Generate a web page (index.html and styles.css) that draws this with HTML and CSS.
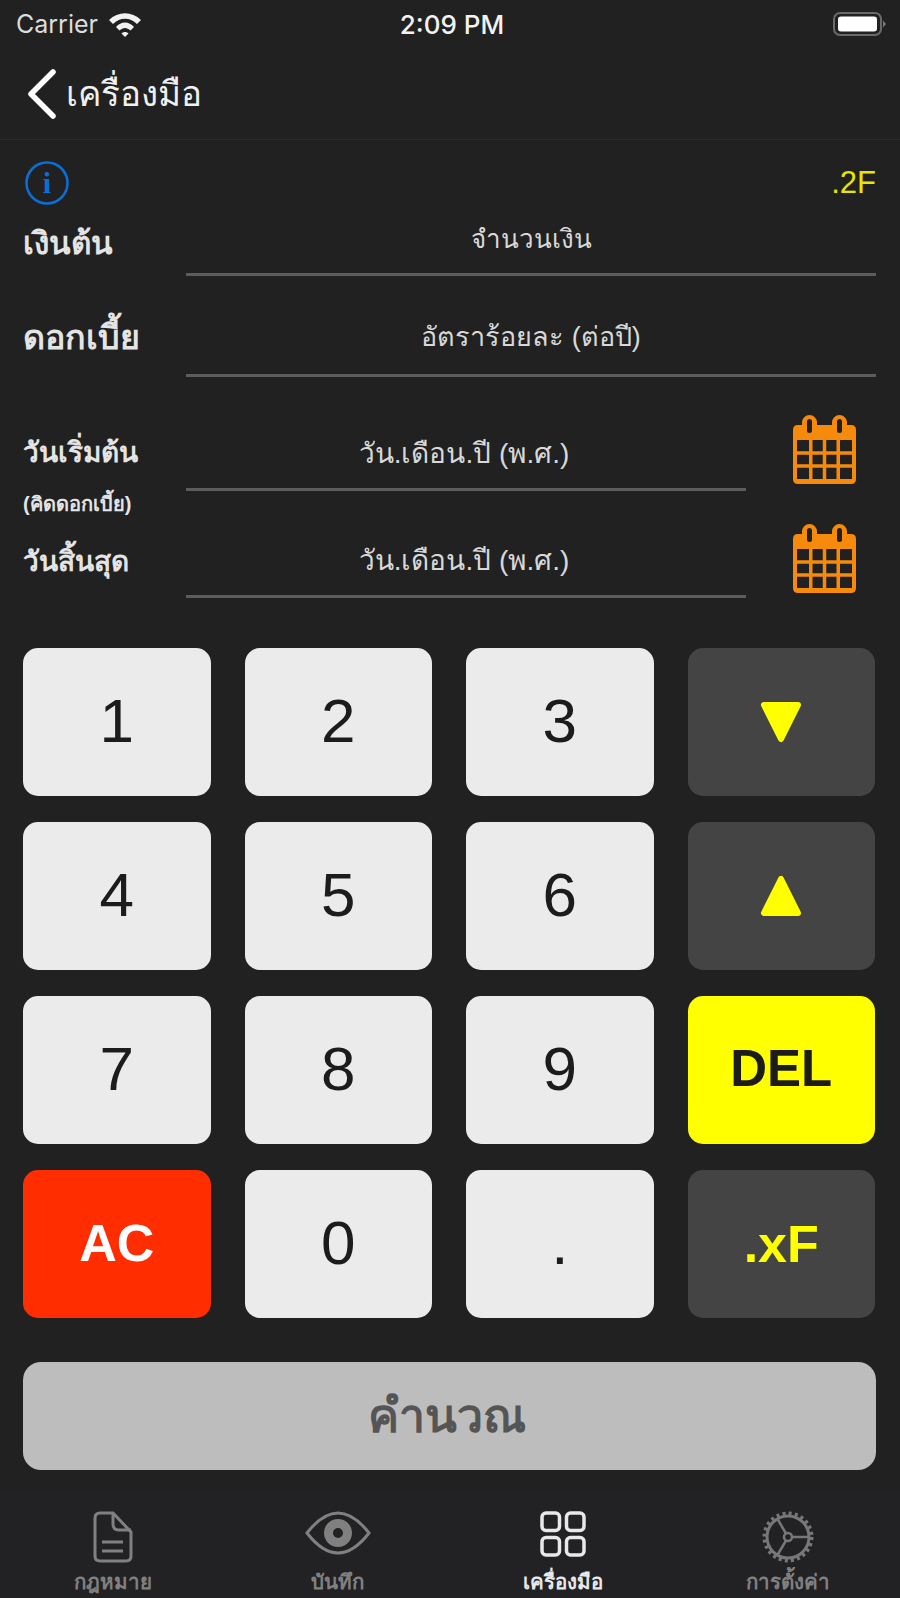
FILE: index.html
```html
<!DOCTYPE html>
<html lang="th">
<head>
    <meta charset="UTF-8">
    <meta name="viewport" content="width=device-width, initial-scale=1.0">
    <title>เครื่องมือ</title>
    <link rel="stylesheet" href="styles.css">
</head>
<body>
    <!-- Status bar -->
    <div class="statusbar">
        <div class="status-left">
            <span>Carrier</span>
            <svg class="wifi" width="36" height="28" viewBox="0 0 36 28">
                <path d="M2 10 C11 1 25 1 34 10 L30 14 C23 7 13 7 6 14 Z" fill="#f2f2f2"/>
                <path d="M9 17 C14 11 22 11 27 17 L23.500 20.500 C20 17 16 17 12.500 20.500 Z" fill="#f2f2f2"/>
                <path d="M18 27 L14.500 23.500 C16.500 21.500 19.500 21.500 21.500 23.500 Z" fill="#f2f2f2"/>
            </svg>
        </div>
        <div class="status-time">2:09 PM</div>
        <svg class="battery" width="56" height="28" viewBox="0 0 56 28">
            <rect x="2" y="3" width="47" height="22" rx="6" fill="none" stroke="#6a6a6a" stroke-width="2"/>
            <rect x="6" y="6.500" width="39" height="15" rx="3" fill="#fff"/>
            <path d="M51 10.500 L54 14 L51 17.500 Z" fill="#777"/>
        </svg>
    </div>

    <!-- Navigation -->
    <div class="navbar">
        <svg class="back" width="32" height="50" viewBox="0 0 32 50">
            <polyline points="27,3 5,25 27,47" fill="none" stroke="#fff" stroke-width="5.500" stroke-linecap="round" stroke-linejoin="round"/>
        </svg>
        <span class="nav-title">เครื่องมือ</span>
    </div>

    <div class="main">
        <div class="info-row">
            <svg width="44" height="44" viewBox="0 0 44 44">
                <circle cx="22" cy="22" r="20.500" fill="none" stroke="#0a6fd8" stroke-width="2.500"/>
                <text x="22" y="32" class="info-i">i</text>
            </svg>
            <span class="precision">.2F</span>
        </div>

        <!-- Fields -->
        <div class="field field-money">
            <div class="field-label">เงินต้น</div>
            <div class="field-input">จำนวนเงิน</div>
        </div>
        <div class="field field-rate">
            <div class="field-label">ดอกเบี้ย</div>
            <div class="field-input">อัตราร้อยละ (ต่อปี)</div>
        </div>
        <div class="field field-date field-start">
            <div class="field-label date-label">วันเริ่มต้น<small>(คิดดอกเบี้ย)</small></div>
            <div class="field-input">วัน.เดือน.ปี (พ.ศ.)</div>
            <svg class="calendar" viewBox="0 0 64 70"><use href="#cal"/></svg>
        </div>
        <div class="field field-date field-end">
            <div class="field-label date-label">วันสิ้นสุด</div>
            <div class="field-input">วัน.เดือน.ปี (พ.ศ.)</div>
            <svg class="calendar" viewBox="0 0 64 70"><use href="#cal"/></svg>
        </div>

        <!-- Keypad -->
        <div class="keypad">
            <div class="key">1</div>
            <div class="key">2</div>
            <div class="key">3</div>
            <div class="key key-dark">
                <svg width="44" height="44" viewBox="0 0 44 44"><path d="M5 5 H39 L22 39 Z" fill="#ffff00" stroke="#ffff00" stroke-width="6" stroke-linejoin="round"/></svg>
            </div>
            <div class="key">4</div>
            <div class="key">5</div>
            <div class="key">6</div>
            <div class="key key-dark">
                <svg width="44" height="44" viewBox="0 0 44 44"><path d="M5 39 H39 L22 5 Z" fill="#ffff00" stroke="#ffff00" stroke-width="6" stroke-linejoin="round"/></svg>
            </div>
            <div class="key">7</div>
            <div class="key">8</div>
            <div class="key">9</div>
            <div class="key key-del">DEL</div>
            <div class="key key-ac">AC</div>
            <div class="key">0</div>
            <div class="key">.</div>
            <div class="key key-dark key-fmt">.xF</div>
        </div>

        <div class="calc-btn">คำนวณ</div>
    </div>

    <!-- Tab bar -->
    <div class="tabbar">
        <div class="tab">
            <div class="tab-icon">
                <svg width="40" height="52" viewBox="0 0 40 52" fill="none" stroke="#808080" stroke-width="3">
                    <path d="M7 2 H20 L38 21 V45 Q38 50 33 50 H7 Q2 50 2 45 V7 Q2 2 7 2 Z"/>
                    <path d="M20 2 V13 Q20 19 26 19 H38"/>
                    <path d="M9 31 H30 M9 40 H30"/>
                </svg>
            </div>
            <span>กฎหมาย</span>
        </div>
        <div class="tab">
            <div class="tab-icon">
                <svg width="66" height="44" viewBox="0 0 66 44" fill="none" stroke="#808080" stroke-width="3">
                    <path d="M2 22 Q33 -18 64 22 Q33 62 2 22 Z"/>
                    <circle cx="33" cy="22" r="9.500" stroke-width="9"/>
                </svg>
            </div>
            <span>บันทึก</span>
        </div>
        <div class="tab tab-active">
            <div class="tab-icon">
                <svg width="46" height="46" viewBox="0 0 46 46" fill="none" stroke="#e8e8e8" stroke-width="3.500">
                    <rect x="2" y="2" width="17.500" height="17.500" rx="4"/>
                    <rect x="26.500" y="2" width="17.500" height="17.500" rx="4"/>
                    <rect x="2" y="26.500" width="17.500" height="17.500" rx="4"/>
                    <rect x="26.500" y="26.500" width="17.500" height="17.500" rx="4"/>
                </svg>
            </div>
            <span>เครื่องมือ</span>
        </div>
        <div class="tab tab-gear">
            <div class="tab-icon">
                <svg width="52" height="52" viewBox="0 0 52 52" fill="none" stroke="#777">
                    <circle cx="26" cy="26" r="21" stroke-width="3"/>
                    <circle cx="26" cy="26" r="23.500" stroke-width="4" stroke-dasharray="3 3.150"/>
                    <circle cx="26" cy="26" r="4" stroke-width="2.500"/>
                    <path d="M30 26 H47 M24 22.500 L15.500 8 M24 29.500 L15.500 44" stroke-width="2.500"/>
                </svg>
            </div>
            <span>การตั้งค่า</span>
        </div>
    </div>

    <!-- Calendar icon -->
    <svg class="defs" width="0" height="0">
        <defs>
            <g id="cal">
                <path d="M5 10 H9 V7.500 A7.500 7.500 0 0 1 24 7.500 V10 H39 V7.500 A7.500 7.500 0 0 1 54 7.500 V10 H58 Q63 10 63 15 V64 Q63 69 58 69 H5 Q0 69 0 64 V15 Q0 10 5 10 Z" fill="#f58a0d"/>
                <rect x="14" y="4" width="5" height="14" rx="2.500" fill="#212121"/>
                <rect x="44" y="4" width="5" height="14" rx="2.500" fill="#212121"/>
                <rect x="4" y="25" width="55" height="39" fill="#212121"/>
                <path d="M4 38 H59 M4 51 H59 M17.750 25 V64 M31.500 25 V64 M45.250 25 V64" stroke="#f58a0d" stroke-width="3.500"/>
            </g>
        </defs>
    </svg>
</body>
</html>
```

FILE: styles.css
```css
/* General */
body {
    margin: 0;
    width: 900px;
    height: 1598px;
    overflow: hidden;
    background-color: #212121;
    color: #e8e8e8;
    font-family: "Liberation Sans", "Noto Sans", sans-serif;
}

/* Status bar */
.statusbar {
    height: 48px;
    padding: 0 12px 0 16px;
    display: grid;
    grid-template-columns: 1fr auto 1fr;
    align-items: center;
    font-family: Inter, "Liberation Sans", sans-serif;
    font-size: 25px;
}

.status-left {
    display: flex;
    align-items: center;
    gap: 9px;
    color: #dcdcdc;
}

.status-time {
    font-size: 26px;
    font-weight: 500;
    color: #f2f2f2;
}

.battery {
    justify-self: end;
}

/* Navigation */
.navbar {
    height: 91px;
    border-bottom: 1px solid #2c2c2c;
    display: flex;
    align-items: center;
    padding-left: 26px;
    gap: 8px;
}

.nav-title {
    font-size: 35px;
    color: #f0f0f0;
}

/* Main */
.main {
    padding: 21px 24px 0 23px;
}

.info-row {
    height: 44px;
    display: flex;
    justify-content: space-between;
    align-items: center;
    padding-left: 2px;
}

.info-i {
    font-family: "Liberation Serif", serif;
    font-weight: bold;
    font-size: 30px;
    fill: #0a6fd8;
    text-anchor: middle;
}

.precision {
    color: #e6e600;
    font-size: 31px;
}

/* Fields */
.field {
    display: grid;
    grid-template-columns: 163px 1fr;
    grid-template-rows: minmax(0, 1fr);
    align-items: center;
}

.field-money { height: 71px; }
.field-rate { height: 101px; }
.field-start { height: 114px; }
.field-end { height: 107px; }

.field-date {
    grid-template-columns: 163px 560px 1fr;
}

.field-label {
    font-size: 31.500px;
    font-weight: bold;
    color: #e4e4e4;
}

.date-label {
    font-size: 28px;
}

.date-label small {
    display: block;
    font-size: 20px;
    margin-top: 14px;
}

.field-input {
    align-self: stretch;
    display: flex;
    align-items: center;
    justify-content: center;
    border-bottom: 3px solid #5c5c5c;
    font-size: 27px;
    color: #d8d8d8;
}

.field-date .field-input {
    font-size: 28px;
    padding-right: 4px;
}

.field-money .field-label { margin-top: 4px; }
.field-money .field-input { padding-bottom: 2px; font-size: 26px; }

.field-rate .field-label { margin-top: 20px; font-size: 34px; }
.field-rate .field-input { padding-top: 22px; }

.field-start .field-label { align-self: start; margin-top: 53px; }
.field-start .field-input { padding-top: 40px; }
.field-start .calendar { margin-top: 32px; }

.field-end .field-label { margin-top: 32px; }
.field-end .field-input { padding-top: 34px; }
.field-end .calendar { margin-top: 28px; }

.calendar {
    width: 64px;
    height: 70px;
    justify-self: end;
    margin-right: 19px;
}

.defs {
    position: absolute;
}

/* Keypad */
.keypad {
    margin-top: 50px;
    display: grid;
    grid-template-columns: repeat(4, 187.500px);
    grid-auto-rows: 148px;
    column-gap: 34px;
    row-gap: 26px;
}

.key {
    background-color: #ebebeb;
    border-radius: 15px;
    display: flex;
    align-items: center;
    justify-content: center;
    padding-bottom: 3px;
    box-sizing: border-box;
    color: #1c1c1c;
    font-size: 62px;
}

.key-dark {
    background-color: #444;
    padding-bottom: 0;
}

.key-del {
    background-color: #ffff00;
    font-size: 51px;
    font-weight: bold;
}

.key-ac {
    background-color: #ff2d00;
    color: white;
    font-size: 52px;
    font-weight: bold;
}

.key-fmt {
    color: #ffff00;
    font-size: 52px;
    font-weight: bold;
}

.calc-btn {
    margin-top: 44px;
    height: 108px;
    box-sizing: border-box;
    padding: 0 5px 2px 0;
    background-color: #bdbdbd;
    border-radius: 18px;
    display: flex;
    align-items: center;
    justify-content: center;
    color: #555;
    font-size: 46.500px;
    font-weight: bold;
}

/* Tab bar */
.tabbar {
    position: absolute;
    left: 0;
    right: 0;
    bottom: 0;
    height: 108px;
    background-color: #222224;
    display: grid;
    grid-template-columns: repeat(4, 1fr);
}

.tab {
    display: flex;
    flex-direction: column;
    align-items: center;
    padding-top: 21px;
    font-size: 20.500px;
    font-weight: bold;
    color: #808080;
}

.tab-icon {
    height: 52px;
    margin-bottom: 4px;
}

.tab span {
    line-height: 30px;
}

.tab-active {
    color: #e8e8e8;
}
```
